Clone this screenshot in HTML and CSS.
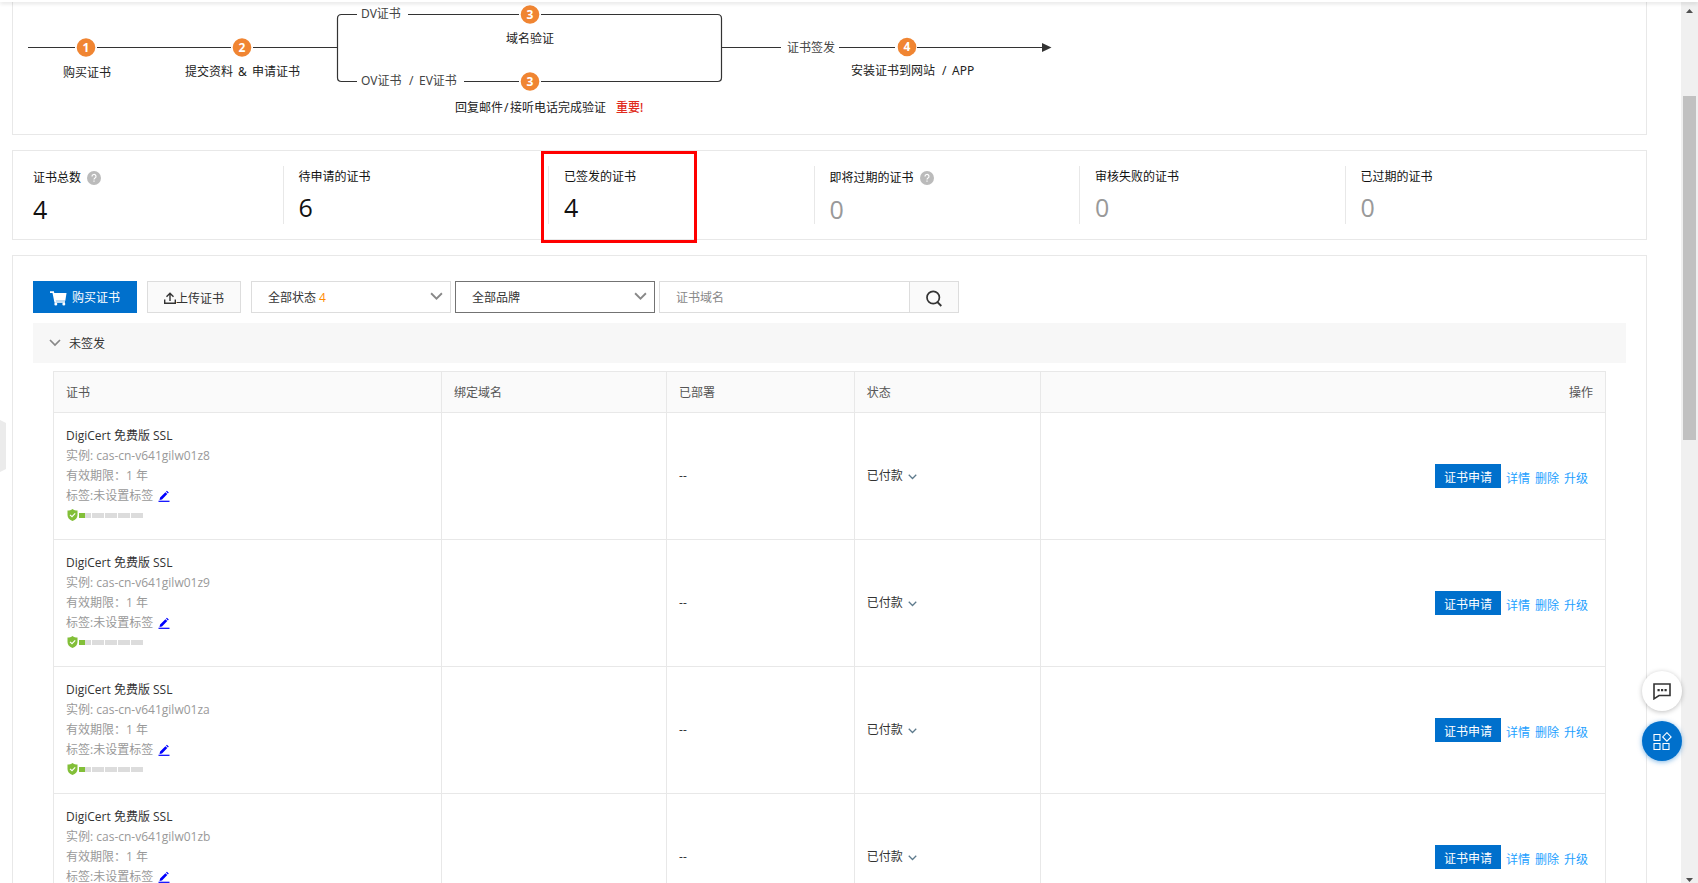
FILE: index.html
```html
<!DOCTYPE html>
<html lang="zh-CN">
<head>
<meta charset="utf-8">
<title>SSL证书</title>
<link rel="stylesheet" href="styles.css">
</head>
<body>
<svg class="sprite" aria-hidden="true">
  <symbol id="chevron" viewBox="0 0 12 8"><path d="M1 1l5 5 5-5" fill="none" stroke="currentColor" stroke-width="1.700"/></symbol>
  <symbol id="help" viewBox="0 0 14 14"><circle cx="7" cy="7" r="7" fill="#bbb"/><path d="M5 5.400a2 1.900 0 1 1 3 1.600c-.7.400-1 .7-1 1.500M7 9.600v1.200" fill="none" stroke="#fff" stroke-width="1.200"/></symbol>
  <symbol id="pencil" viewBox="0 0 12 12"><path d="M.5 11.300h11" stroke="currentColor" stroke-width="1.200" fill="none"/><path d="M1.500 10l.6-2.500L7.400 2.200l1.900 1.900L4 9.400zM8 1.600l.9-.8 1.900 1.800-.9.900z" fill="currentColor"/></symbol>
  <symbol id="shield" viewBox="0 0 10 12"><path d="M5 0c1.500 1 3 1.500 5 1.500V6c0 3-2 5-5 6C2 11 0 9 0 6V1.500C2 1.500 3.500 1 5 0z" fill="#82bf38"/><path d="M2.500 5.800l2 1.900 3.200-3.400" fill="none" stroke="#fff" stroke-width="1.100"/></symbol>
</svg>

<div class="topbar"></div>
<div class="viewport">
  <main class="content">
    <section class="card flow-card">
      <svg class="flow" width="1060" height="132" viewBox="13 2 1060 132" role="img" aria-label="证书申请流程">
        <g class="flow-line">
          <path d="M28 47.500H75M97 47.500H231M253 47.500H337.500M357 14.500H341.500q-4 0-4 4V77.500q0 4 4 4H357M408 14.500H519M541 14.500H717.500q4 0 4 4V77.500q0 4-4 4H541M464 81.500H519M721.500 47.500H781M839 47.500H895M917 47.500H1043"/>
        </g>
        <path d="M1042 43l9.500 4.500-9.500 4.500z" fill="#333"/>
        <g class="flow-dot">
          <circle cx="86" cy="47.500" r="9.300"/><circle cx="242" cy="47.500" r="9.300"/><circle cx="530" cy="14.500" r="9.300"/><circle cx="530" cy="81.500" r="9.300"/><circle cx="907" cy="47" r="9.300"/>
        </g>
        <g class="flow-num">
          <text x="86" y="52">1</text><text x="242" y="52">2</text><text x="530" y="19">3</text><text x="530" y="86">3</text><text x="907" y="51">4</text>
        </g>
        <g class="flow-text">
          <text x="63" y="77">购买证书</text>
          <text x="185" y="76">提交资料 <tspan x="238">&amp; </tspan><tspan x="252">申请证书</tspan></text>
          <text x="506" y="43">域名验证</text>
          <text x="455" y="112">回复邮件<tspan x="504">/</tspan><tspan x="510">接听电话完成验证</tspan></text>
          <text x="616" y="112" class="flow-important">重要!</text>
          <text x="851" y="75">安装证书到网站 <tspan x="942">/ </tspan><tspan x="952">APP</tspan></text>
        </g>
        <g class="flow-text flow-branch">
          <text x="361" y="18">DV证书</text>
          <text x="361" y="85">OV证书 <tspan x="409">/ </tspan><tspan x="419">EV证书</tspan></text>
          <text x="787" y="52">证书签发</text>
        </g>
      </svg>
    </section>

    <section class="card stats">
      <div class="stat"><div class="stat-name">证书总数 <svg class="help"><use href="#help"/></svg></div><div class="stat-value">4</div></div>
      <div class="stat"><div class="stat-name">待申请的证书</div><div class="stat-value">6</div></div>
      <div class="stat marked"><div class="stat-name">已签发的证书</div><div class="stat-value">4</div></div>
      <div class="stat"><div class="stat-name">即将过期的证书 <svg class="help"><use href="#help"/></svg></div><div class="stat-value zero">0</div></div>
      <div class="stat"><div class="stat-name">审核失败的证书</div><div class="stat-value zero">0</div></div>
      <div class="stat"><div class="stat-name">已过期的证书</div><div class="stat-value zero">0</div></div>
    </section>

    <section class="card list">
      <div class="toolbar">
        <button class="btn btn-primary" type="button">
          <svg width="17" height="15" viewBox="0 0 17 15"><path d="M3.500 2H16.500L15.300 9.800H5.200z" fill="#fff"/><path d="M0 1.200h3.200l2 9.800H15" fill="none" stroke="#fff" stroke-width="1.700"/><circle cx="5.800" cy="13" r="1.500" fill="#fff"/><circle cx="13.800" cy="13" r="1.500" fill="#fff"/></svg>
          购买证书
        </button>
        <button class="btn btn-upload" type="button">
          <svg class="upload-icon" width="12" height="12" viewBox="0 0 12 12"><path d="M6 9V1.500M2.500 4.800L6 1.300l3.500 3.500M.7 7.500v3.800h10.600V7.500" fill="none" stroke="#333" stroke-width="1.400"/></svg>上传证书
        </button>
        <div class="select">
          <select aria-label="状态"><option>全部状态</option></select>
          <span class="select-count">4</span>
          <svg class="select-arrow"><use href="#chevron"/></svg>
        </div>
        <div class="select select-active">
          <select aria-label="品牌"><option>全部品牌</option></select>
          <svg class="select-arrow"><use href="#chevron"/></svg>
        </div>
        <form class="search">
          <input type="text" placeholder="证书域名" aria-label="证书域名">
          <button type="button" aria-label="搜索"><svg width="16" height="17" viewBox="0 0 16 17"><circle cx="7.200" cy="7.500" r="6.200" fill="none" stroke="#333" stroke-width="1.700"/><path d="M11.300 12l4 4" stroke="#333" stroke-width="1.800"/></svg></button>
        </form>
      </div>

      <button class="group" type="button"><svg class="group-arrow"><use href="#chevron"/></svg><span>未签发</span></button>

      <div class="table-wrap">
        <table>
          <colgroup><col class="c-cert"><col class="c-domain"><col class="c-deploy"><col class="c-status"><col></colgroup>
          <thead>
            <tr><th>证书</th><th>绑定域名</th><th>已部署</th><th>状态</th><th class="ops">操作</th></tr>
          </thead>
          <tbody>
            <tr>
              <td><div class="name">DigiCert 免费版 SSL</div><div>实例: cas-cn-v641gilw01z8</div><div>有效期限：1 年</div><div>标签:未设置标签 <a href="#" aria-label="编辑标签"><svg class="pencil"><use href="#pencil"/></svg></a></div><div class="level"><svg class="shield"><use href="#shield"/></svg><i class="half"></i><i></i><i></i><i></i><i></i></div></td>
              <td></td><td class="dark">--</td><td class="dark">已付款<svg class="status-arrow"><use href="#chevron"/></svg></td>
              <td><div class="actions"><button type="button">证书申请</button><a href="#">详情</a><a href="#">删除</a><a href="#">升级</a></div></td>
            </tr>
            <tr>
              <td><div class="name">DigiCert 免费版 SSL</div><div>实例: cas-cn-v641gilw01z9</div><div>有效期限：1 年</div><div>标签:未设置标签 <a href="#" aria-label="编辑标签"><svg class="pencil"><use href="#pencil"/></svg></a></div><div class="level"><svg class="shield"><use href="#shield"/></svg><i class="half"></i><i></i><i></i><i></i><i></i></div></td>
              <td></td><td class="dark">--</td><td class="dark">已付款<svg class="status-arrow"><use href="#chevron"/></svg></td>
              <td><div class="actions"><button type="button">证书申请</button><a href="#">详情</a><a href="#">删除</a><a href="#">升级</a></div></td>
            </tr>
            <tr>
              <td><div class="name">DigiCert 免费版 SSL</div><div>实例: cas-cn-v641gilw01za</div><div>有效期限：1 年</div><div>标签:未设置标签 <a href="#" aria-label="编辑标签"><svg class="pencil"><use href="#pencil"/></svg></a></div><div class="level"><svg class="shield"><use href="#shield"/></svg><i class="half"></i><i></i><i></i><i></i><i></i></div></td>
              <td></td><td class="dark">--</td><td class="dark">已付款<svg class="status-arrow"><use href="#chevron"/></svg></td>
              <td><div class="actions"><button type="button">证书申请</button><a href="#">详情</a><a href="#">删除</a><a href="#">升级</a></div></td>
            </tr>
            <tr>
              <td><div class="name">DigiCert 免费版 SSL</div><div>实例: cas-cn-v641gilw01zb</div><div>有效期限：1 年</div><div>标签:未设置标签 <a href="#" aria-label="编辑标签"><svg class="pencil"><use href="#pencil"/></svg></a></div><div class="level"><svg class="shield"><use href="#shield"/></svg><i class="half"></i><i></i><i></i><i></i><i></i></div></td>
              <td></td><td class="dark">--</td><td class="dark">已付款<svg class="status-arrow"><use href="#chevron"/></svg></td>
              <td><div class="actions"><button type="button">证书申请</button><a href="#">详情</a><a href="#">删除</a><a href="#">升级</a></div></td>
            </tr>
          </tbody>
        </table>
      </div>
    </section>
  </main>

  <div class="scrollbar" aria-hidden="true">
    <svg width="7" height="4" viewBox="0 0 7 4"><path d="M0 4l3.500-4L7 4z" fill="#505050"/></svg>
    <div class="track"><div class="thumb"></div></div>
    <svg width="7" height="4" viewBox="0 0 7 4"><path d="M0 0l3.500 4L7 0z" fill="#505050"/></svg>
  </div>
</div>

<svg class="drawer" width="6" height="52" viewBox="0 0 6 52" aria-hidden="true"><path d="M0 0l6 3v46l-6 3z" fill="#ebebeb"/></svg>
<div class="floats">
  <button class="float" type="button" aria-label="咨询"><svg width="18" height="17" viewBox="0 0 18 17"><path d="M1 1h16v11.500H6L1 15.800z" fill="none" stroke="#333" stroke-width="1.600"/><path d="M4.500 6h2.200v2.200H4.500zM8 6h2.200v2.200H8zM11.500 6h2.200v2.200h-2.200z" fill="#333"/></svg></button>
  <button class="float float-blue" type="button" aria-label="更多应用"><svg width="19" height="18" viewBox="0 0 19 18"><path d="M1 2.500h6v6H1zM1 11.500h6v6H1zM10 11.500h6v6h-6zM13.900.7l4.200 4.200-4.200 4.200-4.200-4.200z" fill="none" stroke="#fff" stroke-width="1.100"/></svg></button>
</div>
</body>
</html>
```
FILE: styles.css
```css
*, *::after { box-sizing: border-box; }
body {
  margin: 0;
  height: 100vh;
  overflow: hidden;
  display: flex;
  flex-direction: column;
  background: #fff;
  color: #333;
  font: 12px/20px "Open Sans", "Noto Sans CJK SC", sans-serif;
}
button, input, select { font: inherit; color: inherit; margin: 0; border-radius: 0; }
button { cursor: pointer; }
a { text-decoration: none; }
.sprite { position: absolute; width: 0; height: 0; }

.topbar { flex: none; height: 2px; background: #fff; box-shadow: 0 1px 4px rgba(0, 0, 0, .2); z-index: 2; }
.viewport { flex: 1; min-height: 0; display: flex; }
.content {
  flex: 1;
  min-width: 0;
  padding: 0 34px 0 12px;
  overflow: hidden;
  display: flex;
  flex-direction: column;
  gap: 15px;
}
.card { flex: none; border: 1px solid #e8e8e8; background: #fff; }

/* process diagram */
.flow-card { border-top: 0; }
.flow { display: block; font-family: "Noto Sans", "Noto Sans CJK SC", sans-serif; }
.flow-line { fill: none; stroke: #333; stroke-width: 1.2; }
.flow-dot { fill: #f08532; }
.flow-num { fill: #fff; font-size: 12px; font-weight: 700; text-anchor: middle; }
.flow-text { fill: #222; font-size: 12px; }
.flow-branch { fill: #444; }
.flow-text .flow-important { fill: #e02b20; font-weight: 500; }

/* counters */
.stats { display: grid; grid-template-columns: repeat(6, 1fr); padding: 15px 20px; }
.stat { position: relative; height: 58px; margin-left: -16px; padding-left: 15px; border-left: 1px solid #e8e8e8; }
.stat:first-child { border-left-color: transparent; }
.stat-name { display: flex; align-items: center; gap: 6px; color: #111; line-height: 22px; }
.stat-name:has(.help) { line-height: 24px; }
.stat-value { color: #111; font-size: 25px; line-height: 38px; }
.zero { color: #999; }
.help { width: 14px; height: 14px; }
.marked::after {
  content: "";
  position: absolute;
  left: -8px;
  top: -15px;
  width: 156px;
  height: 92px;
  border: 3px solid #f00;
}

/* filters */
.list { padding: 25px 20px; }
.toolbar { display: flex; gap: 4px; }
.btn { display: flex; align-items: center; height: 32px; white-space: nowrap; }
.btn-primary { gap: 5px; padding: 2px 17px 0; margin-right: 6px; border: 0; background: #0070cc; color: #fff; }
.btn-upload { padding: 4px 16px 0; margin-right: 6px; border: 1px solid #ddd; background: #fafafa; }
.upload-icon { margin-bottom: 2px; }
.select { position: relative; width: 200px; height: 32px; }
.select select {
  appearance: none;
  width: 100%;
  height: 100%;
  padding: 2px 16px 0;
  border: 1px solid #ddd;
  background: #fff;
}
.select-active select { border-color: #737373; }
.select-count { position: absolute; left: 68px; top: 7px; color: #ff8a00; pointer-events: none; }
.select-arrow { position: absolute; right: 8px; top: 11px; width: 13px; height: 9px; color: #888; pointer-events: none; }
.search { display: flex; width: 300px; height: 32px; border: 1px solid #ddd; }
.search input { flex: 1; min-width: 0; padding: 2px 16px 0; border: 0; background: #fff; outline: 0; }
.search input::placeholder { color: #888; opacity: 1; }
.search button {
  display: flex;
  align-items: center;
  justify-content: center;
  width: 49px;
  padding: 2px 0 0;
  border: 0;
  border-left: 1px solid #ddd;
  background: #fafafa;
}

.group {
  display: flex;
  align-items: center;
  gap: 8px;
  width: 100%;
  height: 40px;
  margin-top: 10px;
  padding: 0 16px;
  border: 0;
  background: #f7f7f7;
}
.group span { padding-top: 2px; }
.group-arrow { width: 12px; height: 8px; color: #888; }

/* certificates */
.table-wrap { padding: 8px 20px 0; }
table { width: 100%; table-layout: fixed; border-collapse: collapse; }
.c-cert { width: 25%; }
.c-domain { width: 14.5%; }
.c-deploy { width: 12.1%; }
.c-status { width: 12%; }
th, td { border: 1px solid #e8e8e8; padding: 13px 12px; text-align: left; color: #999; }
th { height: 41px; padding: 2px 12px 0; background: #fafafa; color: #555; font-weight: 400; }
th.ops { text-align: right; }
td.dark, .name { color: #333; }
.pencil { width: 12px; height: 12px; margin-left: 2px; color: #00f; vertical-align: -2px; }
.level { display: flex; align-items: center; gap: 1px; height: 20px; padding: 0 0 2px 1px; }
.shield { width: 11px; height: 12px; }
.level i { width: 12px; height: 5px; background: #dcdcdc; }
.level .half { background: linear-gradient(90deg, #82bf38 50%, #dcdcdc 50%); }
.status-arrow { width: 9px; height: 6px; margin-left: 5px; color: #5d7a8c; vertical-align: 0; }
.actions { display: flex; justify-content: flex-end; gap: 5px; padding: 2px 5px 0 0; line-height: 24px; }
.actions button { height: 24px; padding: 4px 9px 0; border: 0; background: #0070cc; color: #fff; line-height: 20px; }
.actions a { color: #1e9fff; padding-top: 3px; line-height: 24px; }

/* window scroll bar */
.scrollbar {
  flex: none;
  width: 17px;
  display: flex;
  flex-direction: column;
  align-items: center;
  padding: 7px 0 1px;
  background: #f0f0f0;
}
.track { flex: 1; width: 13px; padding-top: 83px; }
.thumb { height: 44%; min-height: 40px; background: #c1c1c1; }

/* floating controls */
.drawer { position: fixed; left: 0; top: 420px; }
.floats { position: fixed; right: 16px; bottom: 122px; display: flex; flex-direction: column; gap: 10px; }
.float {
  display: flex;
  align-items: center;
  justify-content: center;
  width: 40px;
  height: 40px;
  padding: 0;
  border: 0;
  border-radius: 50%;
  background: #fff;
  box-shadow: 0 1px 5px rgba(0, 0, 0, .25);
}
.float-blue { background: #0070cc; box-shadow: 0 1px 5px rgba(0, 112, 204, .5); }
```
